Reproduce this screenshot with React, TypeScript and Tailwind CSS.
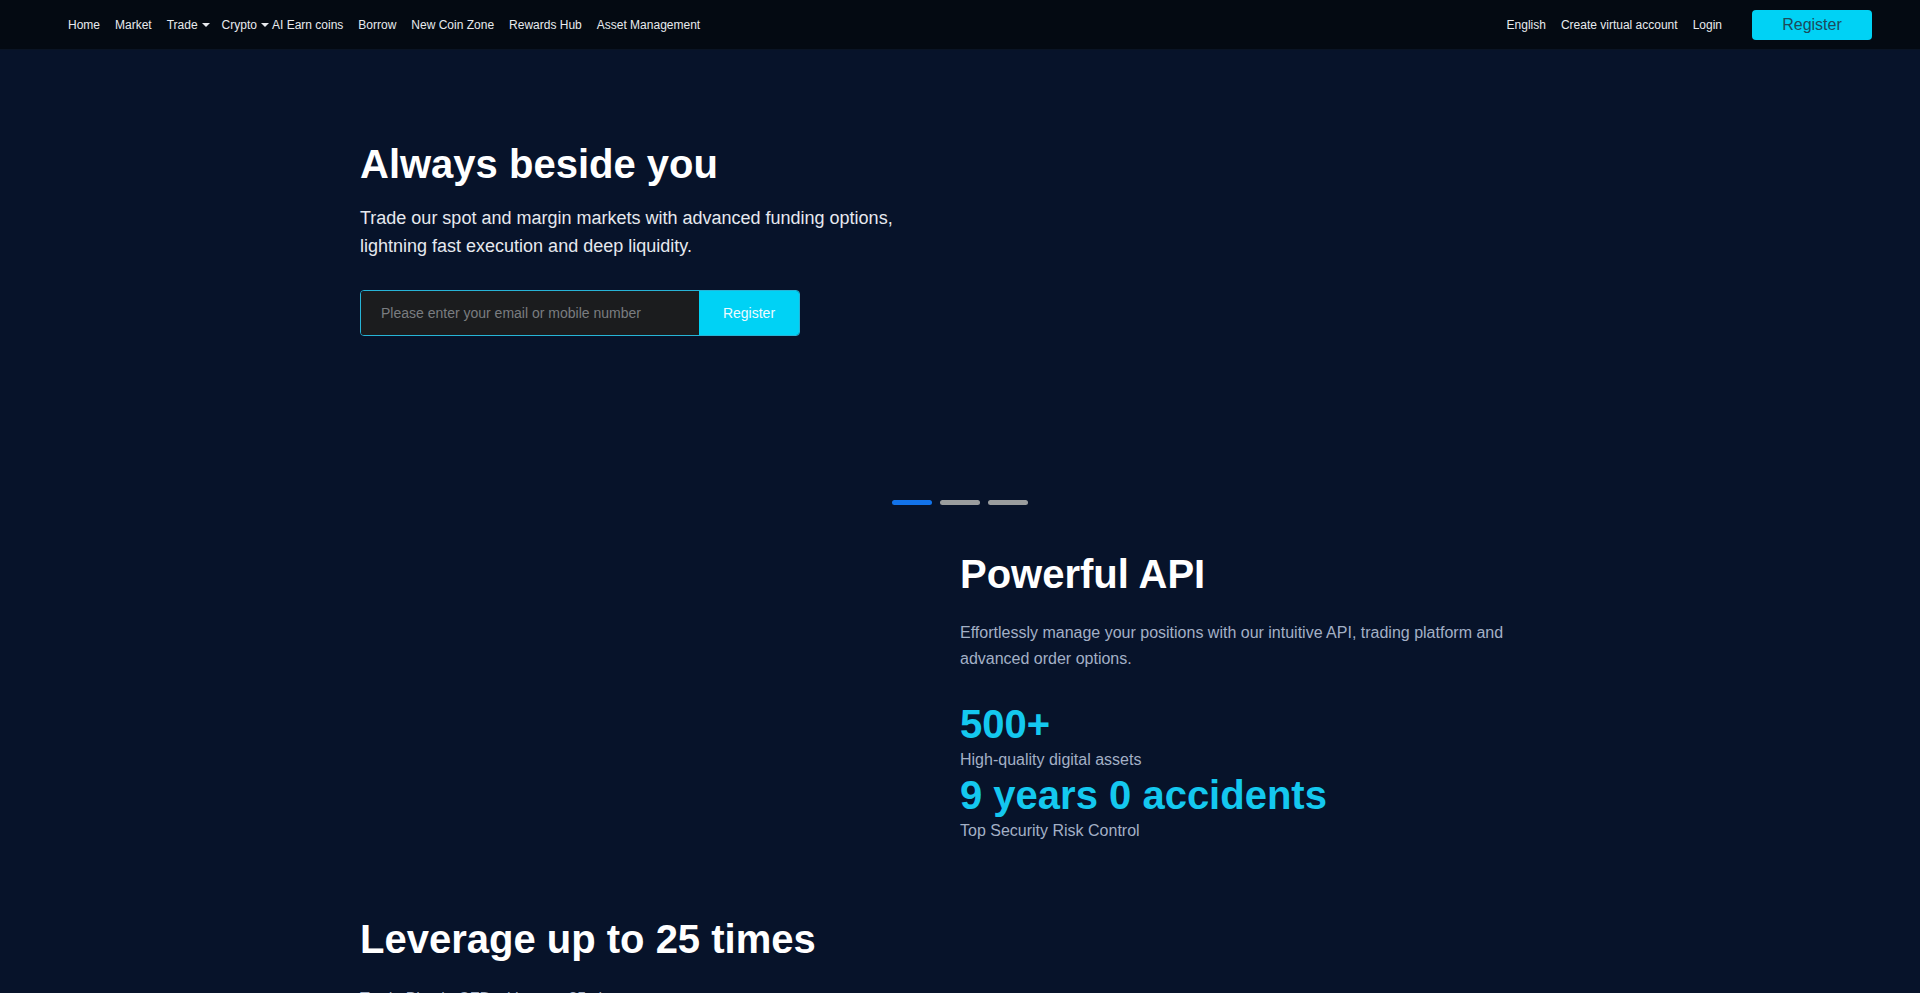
import React from "react";

const NAV_LEFT = [
  { label: "Home" },
  { label: "Market" },
  { label: "Trade", caret: true, gap: "mr-3" },
  { label: "Crypto", caret: true, gap: "mr-[3px]" },
  { label: "AI Earn coins" },
  { label: "Borrow" },
  { label: "New Coin Zone" },
  { label: "Rewards Hub" },
  { label: "Asset Management" },
];

function Caret() {
  return (
    <span className="ml-1 inline-block h-0 w-0 border-x-4 border-t-4 border-x-transparent border-t-[#e8eaee]" />
  );
}

function Header() {
  return (
    <header className="flex h-[50px] items-center justify-between border-b border-[#0a1424] bg-[#040a12] pl-[68px] pr-[48px] text-[12px] text-[#e8eaee]">
      <nav className="flex items-center">
        {NAV_LEFT.map((item) => (
          <a
            key={item.label}
            href="#"
            className={`flex items-center whitespace-nowrap ${item.gap ?? "mr-[15px]"}`}
          >
            {item.label}
            {item.caret && <Caret />}
          </a>
        ))}
      </nav>
      <div className="flex items-center">
        <a href="#" className="mr-[15px]">English</a>
        <a href="#" className="mr-[15px]">Create virtual account</a>
        <a href="#" className="mr-[30px]">Login</a>
        <button className="h-[30px] w-[120px] rounded-[4px] bg-[#00d2f5] text-[16px] text-[#1d4a5b]">
          Register
        </button>
      </div>
    </header>
  );
}

function Hero() {
  return (
    <section className="mx-auto w-[1200px] pt-[90px]">
      <h1 className="text-[40px] font-bold leading-[48px] text-white">
        Always beside you
      </h1>
      <p className="mt-4 w-[560px] text-[18px] leading-[28px] text-[#e6e9ef]">
        Trade our spot and margin markets with advanced funding options,
        lightning fast execution and deep liquidity.
      </p>
      <form className="mt-[30px] flex h-[46px] w-[440px] overflow-hidden rounded-[4px] border border-[#27b4d6]">
        <input
          type="text"
          placeholder="Please enter your email or mobile number"
          className="h-full w-[338px] bg-[#1b1c1e] px-5 text-[14px] text-white outline-none placeholder:text-[#7a7c80]"
        />
        <button
          type="button"
          className="h-full flex-1 bg-[#00d2f5] text-[14px] text-[#eefaff]"
        >
          Register
        </button>
      </form>
    </section>
  );
}

function Dots() {
  return (
    <div className="mt-[164px] flex justify-center gap-2">
      <span className="h-[5px] w-10 rounded-full bg-[#1273ea]" />
      <span className="h-[5px] w-10 rounded-full bg-[#9a9d9e]" />
      <span className="h-[5px] w-10 rounded-full bg-[#9a9d9e]" />
    </div>
  );
}

function ApiSection() {
  return (
    <section className="mx-auto mt-[45px] grid w-[1200px] grid-cols-2">
      <div />
      <div>
        <h2 className="text-[40px] font-bold leading-[48px] text-white">
          Powerful API
        </h2>
        <p className="mt-[22px] w-[560px] text-[16px] leading-[26px] text-[#a3b0c6]">
          Effortlessly manage your positions with our intuitive API, trading
          platform and advanced order options.
        </p>
        <div className="mt-[28px] text-[40px] font-bold leading-[48px] text-[#14c8ef]">
          500+
        </div>
        <div className="text-[16px] leading-[23px] text-[#a3b0c6]">
          High-quality digital assets
        </div>
        <div className="text-[40px] font-bold leading-[48px] text-[#14c8ef]">
          9 years 0 accidents
        </div>
        <div className="text-[16px] leading-[24px] text-[#a3b0c6]">
          Top Security Risk Control
        </div>
      </div>
    </section>
  );
}

function LeverageSection() {
  return (
    <section className="mx-auto mt-[72px] w-[1200px] pb-24">
      <h2 className="text-[40px] font-bold leading-[48px] text-white">
        Leverage up to 25 times
      </h2>
      <p className="mt-[23px] w-[560px] text-[16px] leading-[26px] text-[#a3b0c6]">
        Trade Bitcoin CFD with up to 25x leverage.
      </p>
    </section>
  );
}

export default function App() {
  return (
    <div className="min-h-screen bg-[#07132a] font-['Liberation_Sans',Arial,sans-serif]">
      <Header />
      <Hero />
      <Dots />
      <ApiSection />
      <LeverageSection />
    </div>
  );
}
